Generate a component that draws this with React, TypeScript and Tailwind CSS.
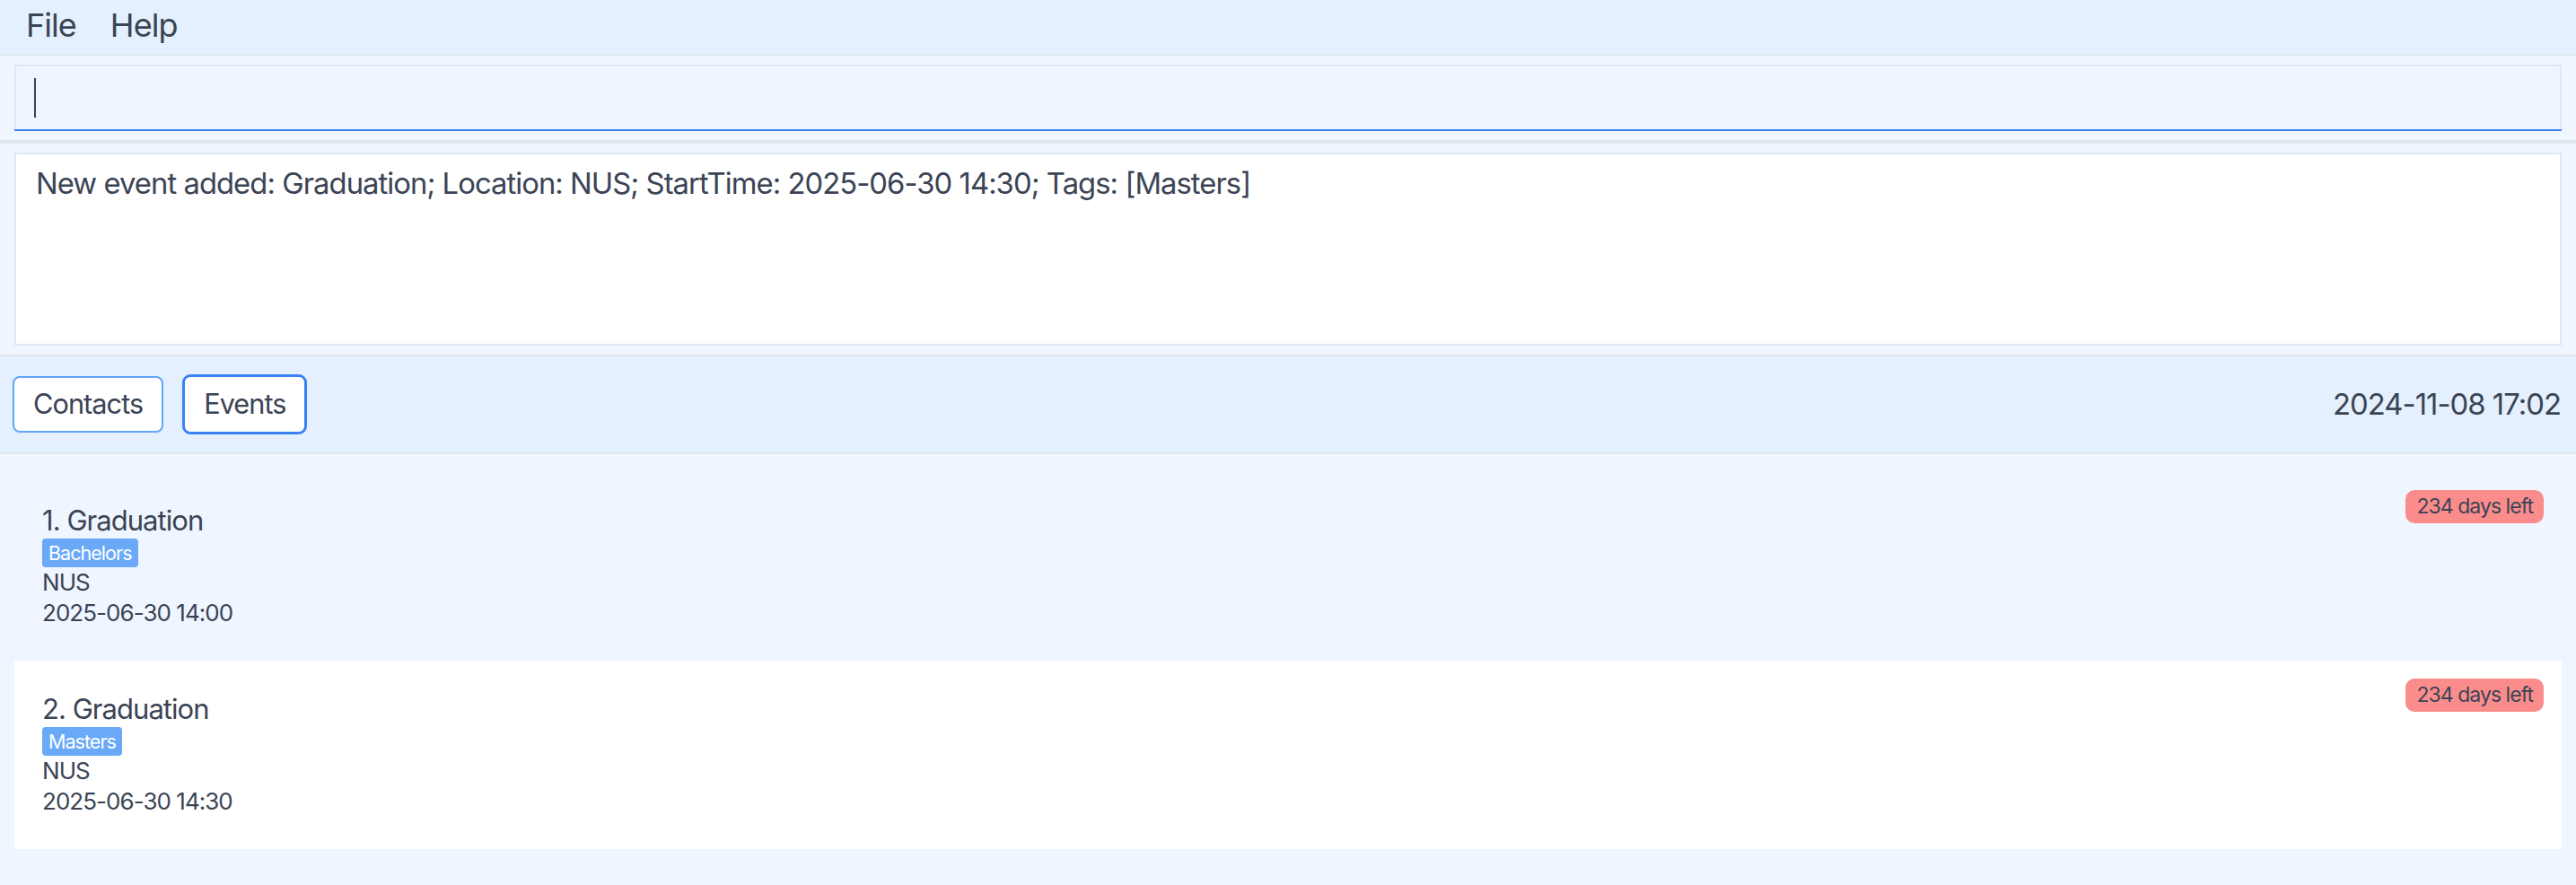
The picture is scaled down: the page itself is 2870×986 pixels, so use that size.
// App.tsx
// Event list window: menu, command box, result display, tab bar and event cards.

type EventItem = {
  index: number;
  name: string;
  tag: string;
  location: string;
  start: string;
  left: string;
  bg: string;
};

const events: EventItem[] = [
  { index: 1, name: "Graduation", tag: "Bachelors", location: "NUS", start: "2025-06-30 14:00", left: "234 days left", bg: "bg-transparent" },
  { index: 2, name: "Graduation", tag: "Masters", location: "NUS", start: "2025-06-30 14:30", left: "234 days left", bg: "bg-white" },
];

function EventCard({ ev }: { ev: EventItem }) {
  return (
    <div className={`flex h-[210px] justify-between pl-[31px] pr-[20px] pt-[20px] ${ev.bg}`}>
      <div className="flex flex-col justify-center pb-[20px] text-[#3b4455]">
        <div className="text-[31px] leading-[36px]">
          {ev.index}. {ev.name}
        </div>
        <div className="mt-[2px] flex">
          <span className="rounded-[4px] bg-[#6aa9f8] px-[7px] text-[21.5px] leading-[32px] text-white">{ev.tag}</span>
        </div>
        <div className="text-[26px] leading-[34px]">{ev.location}</div>
        <div className="text-[26px] leading-[34px]">{ev.start}</div>
      </div>
      <div>
        <span className="inline-block rounded-[10px] bg-[#fb8c8c] px-[12px] text-[23px] leading-[37px] text-[#3b4455]">{ev.left}</span>
      </div>
    </div>
  );
}

export default function App() {
  return (
    <div className="flex h-[986px] w-[2870px] flex-col overflow-hidden bg-[#eff6ff] font-['Inter',sans-serif] tracking-[-0.06em] text-[#3b4455]">
      {/* menu bar */}
      <div className="flex h-[62px] items-center gap-[38px] border-b-2 border-[#dfe7ef] bg-[#e4f0fd] pb-[5px] pl-[29px] text-[36px]">
        <span>File</span>
        <span>Help</span>
      </div>

      {/* command box */}
      <div className="px-[16px] pt-[10px] pb-[10px]">
        <div className="flex h-[72px] items-center border-2 border-b-0 border-[#dfe7ef] bg-[#eff6ff]">
          <div className="ml-[20px] h-[44px] w-[2px] bg-[#3b4455]" />
        </div>
        <div className="h-[2px] bg-[#3b82f6]" />
      </div>

      <div className="h-[4px] bg-[#dfe7ef]" />

      {/* result display */}
      <div className="px-[16px] pt-[10px] pb-[10px]">
        <div className="h-[215px] border-2 border-[#dde8f3] bg-white px-[22px] pt-[12px] text-[32.8px] leading-[40px]">
          New event added: Graduation; Location: NUS; StartTime: 2025-06-30 14:30; Tags: [Masters]
        </div>
      </div>

      {/* tab bar */}
      <div className="flex h-[111px] items-center justify-between border-y-2 border-[#dfe7ef] bg-[#e4f0fd] pl-[14px] pr-[17px]">
        <div className="flex items-center gap-[21px]">
          <button className="h-[63px] rounded-[8px] border-2 border-[#60a5fa] bg-white px-[21px] text-[30.7px]">Contacts</button>
          <button className="h-[67px] rounded-[9px] border-[3px] border-[#3b82f6] bg-white px-[21px] text-[30.7px]">Events</button>
        </div>
        <span className="text-[32.8px]">2024-11-08 17:02</span>
      </div>

      {/* event list */}
      <div className="flex flex-col px-[16px] pt-[20px]">
        {events.map((ev) => (
          <EventCard key={ev.index} ev={ev} />
        ))}
      </div>
    </div>
  );
}
